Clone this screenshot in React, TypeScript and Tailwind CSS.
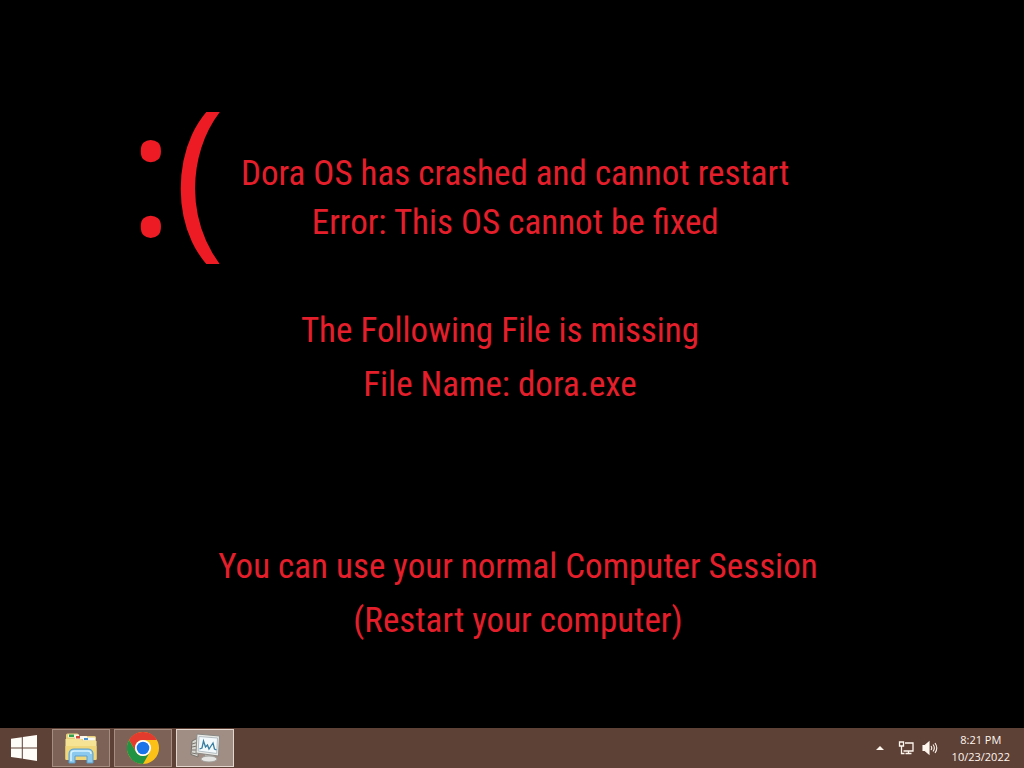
import type { ReactNode } from 'react';

export default function App() {
  return (
    <div className="flex min-h-screen flex-col bg-black font-['Open_Sans','Noto_Sans',sans-serif]">
      <main className="flex-1 text-center font-['Roboto_Condensed','Open_Sans',sans-serif] text-[35px] leading-[54px] text-[#e41f2b]">
        <header className="flex items-start gap-4 pt-[74px] pl-32">
          <p className="font-['Open_Sans',sans-serif] text-[174px] leading-[190px] text-[#ed1c24]">:(</p>
          <div className="pt-[75px] leading-[49px]">
            <h1>Dora OS has crashed and cannot restart</h1>
            <p>Error: This OS cannot be fixed</p>
          </div>
        </header>

        <section className="pt-10 pr-6">
          <p>The Following File is missing</p>
          <p>File Name: dora.exe</p>
        </section>

        <section className="pt-32 pb-16 pl-3">
          <p>You can use your normal Computer Session</p>
          <p>(Restart your computer)</p>
        </section>
      </main>

      <footer className="flex h-10 items-center bg-[#5d4036] text-[#fff6ee]">
        <button aria-label="Start" className="grid h-10 w-12 place-items-center">
          <StartIcon />
        </button>
        <nav className="ml-1 flex gap-1">
          <TaskButton label="File Explorer">
            <ExplorerIcon />
          </TaskButton>
          <TaskButton label="Google Chrome">
            <ChromeIcon />
          </TaskButton>
          <TaskButton label="Task Manager" active>
            <MonitorIcon />
          </TaskButton>
        </nav>

        <div className="ml-auto flex items-center pr-3.5">
          <button aria-label="Show hidden icons" className="mr-3 grid h-10 w-3 place-items-center">
            <svg width="8" height="4" viewBox="0 0 8 4" fill="currentColor">
              <path d="M4 0 8 4H0z" />
            </svg>
          </button>
          <button aria-label="Network" className="mr-2 grid size-4 place-items-center">
            <NetworkIcon />
          </button>
          <button aria-label="Volume" className="mr-3.5 grid size-4 place-items-center">
            <VolumeIcon />
          </button>
          <time className="text-center text-[11px] leading-[17px]">
            <span className="block">8:21 PM</span>
            <span className="block">10/23/2022</span>
          </time>
        </div>
      </footer>
    </div>
  );
}

function TaskButton({ label, active, children }: { label: string; active?: boolean; children: ReactNode }) {
  return (
    <button
      aria-label={label}
      className={
        active
          ? 'grid h-[38px] w-[58px] place-items-center border border-[#e2d6cf] bg-[#a08d83]'
          : 'grid h-[38px] w-[58px] place-items-center border border-[#a58d82] bg-[#7c6257]'
      }
    >
      {children}
    </button>
  );
}

function StartIcon() {
  return (
    <svg width="26" height="26" viewBox="0 0 26 26" fill="#fffdf8">
      <path d="M0 3.8 10.8 2.3V12.5H0zM11.8 2.1 26 0V12.5H11.8zM0 13.5H10.8V23.6L0 22zM11.8 13.5H26V26L11.8 23.8z" />
    </svg>
  );
}

function ExplorerIcon() {
  return (
    <svg width="34" height="32" viewBox="0 0 34 32">
      <path d="M2 3q0-1.500 1.500-1.500h10l2 2.500h15q1.500 0 1.500 1.500V27H2z" fill="#e9cf78" />
      <path d="M4 2.500h11v3H4z" fill="#f7f4e4" />
      <path d="M5 2.500h5v2.500H5z" fill="#35a04a" />
      <path d="M11 4h12v3H11z" fill="#fbf6e8" />
      <path d="M12 4h4v2.500h-4z" fill="#cf4b3b" />
      <path d="M19 5.500h12v3H19z" fill="#f6f8fa" />
      <path d="M20 6h4v2h-4z" fill="#4b93cf" />
      <path d="M1.500 7H17l2 2h13.500V27q0 1-1 1h-29q-1 0-1-1z" fill="#f7e394" />
      <path d="M1.500 14h31v13q0 1-1 1h-29q-1 0-1-1z" fill="#f0d779" />
      <path d="M5 31V22q0-5 5-5h14q5 0 5 5v9h-6v-7H11v7z" fill="#8bc9ee" stroke="#5d9fca" />
      <path d="M7 29v-7q0-3 3-3h14q3 0 3 3" fill="none" stroke="#d8f2ff" strokeWidth="1.500" />
    </svg>
  );
}

function ChromeIcon() {
  return (
    <svg width="32" height="32" viewBox="0 0 32 32">
      <circle cx="16" cy="16" r="16" fill="#fbc116" />
      <path d="M2.140 8A16 16 0 0 1 29.860 8H16a8 8 0 0 0-6.930 12z" fill="#e33b2e" />
      <path d="M2.140 8A16 16 0 0 0 16 32l6.930-12A8 8 0 0 1 9.070 20z" fill="#229342" />
      <circle cx="16" cy="16" r="8" fill="#fff" />
      <circle cx="16" cy="16" r="6.300" fill="#1a73e8" />
    </svg>
  );
}

function MonitorIcon() {
  return (
    <svg width="32" height="30" viewBox="0 0 32 30">
      <path d="M3 8 9 5v19l-7-2.500z" fill="#d8d6d0" stroke="#77736d" />
      <path d="M3 11l5-1.500M3 14l5-1M3 17h5M3 20l5 1" stroke="#77736d" />
      <path d="M16 21h8l1 4h-9z" fill="#b9bab8" />
      <ellipse cx="20" cy="26" rx="8" ry="3" fill="#e4e5e3" stroke="#a1a19d" />
      <path d="M8 1 30.500 3l-1 20L7 20z" fill="#e9e9e5" stroke="#8b8985" />
      <path d="M10 3.500l18.500 1.500-.8 15.500L9.200 18z" fill="#f4fafc" stroke="#b3bec3" />
      <path d="M10.500 16l2.500-1 1.500-7 2 6 2-2 1.500 4 2-3 2-3 1.500 6 2 1" fill="none" stroke="#397da1" strokeWidth="1.300" />
    </svg>
  );
}

function NetworkIcon() {
  return (
    <svg width="16" height="16" viewBox="0 0 16 16" fill="none" stroke="currentColor" strokeWidth="1.300">
      <path d="M7 3h8v8H5.500M10.500 11v2.500M7.500 13.500h6" />
      <path d="M1.500 2h4v4h-4zM3.500 6v7.500h3" />
    </svg>
  );
}

function VolumeIcon() {
  return (
    <svg width="16" height="16" viewBox="0 0 16 16" fill="none" stroke="currentColor" strokeWidth="1.100">
      <path d="M1 5.500h2L7 2v12l-4-3.500H1z" fill="currentColor" />
      <path d="M9 6q1.500 2 0 4M11 4.500q2.700 3.500 0 7M13 3q3.600 5 0 10" />
    </svg>
  );
}
